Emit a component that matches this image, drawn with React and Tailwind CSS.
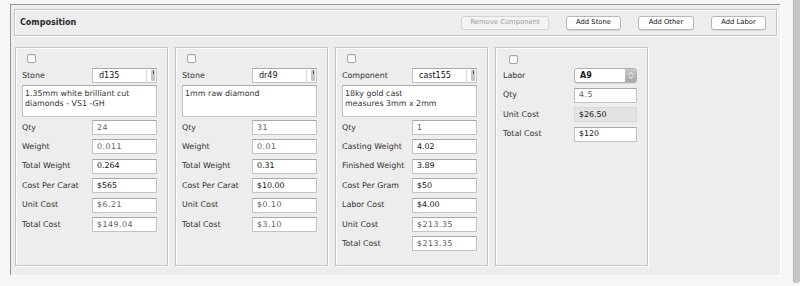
import React from "react";

const F = { fontFamily: '"DejaVu Sans", "Liberation Sans", sans-serif' };

const panels = [
  {
    kind: "Stone",
    code: "d135",
    desc: ["1.35mm white brilliant cut", "diamonds - VS1 -GH"],
    rows: [
      ["Qty", "24", 0],
      ["Weight", "0.011", 0],
      ["Total Weight", "0.264", 1],
      ["Cost Per Carat", "$565", 1],
      ["Unit Cost", "$6.21", 0],
      ["Total Cost", "$149.04", 0],
    ],
  },
  {
    kind: "Stone",
    code: "dr49",
    desc: ["1mm raw diamond"],
    rows: [
      ["Qty", "31", 0],
      ["Weight", "0.01", 0],
      ["Total Weight", "0.31", 1],
      ["Cost Per Carat", "$10.00", 1],
      ["Unit Cost", "$0.10", 0],
      ["Total Cost", "$3.10", 0],
    ],
  },
  {
    kind: "Component",
    code: "cast155",
    desc: ["18ky gold cast", "measures 3mm x 2mm"],
    rows: [
      ["Qty", "1", 0],
      ["Casting Weight", "4.02", 1],
      ["Finished Weight", "3.89", 1],
      ["Cost Per Gram", "$50", 1],
      ["Labor Cost", "$4.00", 1],
      ["Unit Cost", "$213.35", 0],
      ["Total Cost", "$213.35", 0],
    ],
  },
];

function Checkbox() {
  return (
    <div className="w-[9px] h-[9px] bg-white border border-[#a4a4a4] rounded-[2px] shadow-[inset_0_1px_0_#e8e8e8]" />
  );
}

function Field({ value, dark, disabled, w = "w-[65px]" }) {
  return (
    <div
      className={
        w +
        " h-[15px] flex items-center pl-[4px] border text-[7.9px] leading-none " +
        (disabled
          ? "bg-[#e3e3e3] border-[#d8d8d8] "
          : "bg-white border-[#c3c3c3] border-t-[#a8a8a8] ") +
        (dark ? "text-[#111]" : "text-[#5e5e5e] tracking-[0.5px]")
      }
    >
      {value}
    </div>
  );
}

function Label({ children }) {
  return <span className="text-[7.9px] text-[#333] leading-none">{children}</span>;
}

function Combo({ code }) {
  return (
    <div className="flex h-[15px] w-[65px]">
      <div className="flex-1 flex items-center pl-[6px] bg-white border border-[#c3c3c3] border-t-[#a8a8a8] border-r-0 text-[8px] text-[#111] leading-none">
        {code}
      </div>
      <div className="w-[11px] bg-white border border-[#c3c3c3] border-t-[#a8a8a8] border-l-[#dcdcdc] flex justify-end pr-[1px] pt-[1px]">
        <div className="w-[4px] h-[11px] rounded-[1px] bg-[#c4c4c4] flex justify-center pt-[1px]">
          <div className="w-[1px] h-[3px] bg-[#555]" />
        </div>
      </div>
    </div>
  );
}

const etched =
  "border border-[#c4c4c4] shadow-[inset_1px_1px_0_#ffffff,1px_1px_0_#ffffff]";

function ItemPanel({ p }) {
  return (
    <div className={"w-[153px] h-[219px] flex flex-col pt-[6px] pl-[6px] pr-[10px] " + etched}>
      <div className="pl-[5px]">
        <Checkbox />
      </div>
      <div className="flex items-center justify-between h-[15px] mt-[5px]">
        <Label>{p.kind}</Label>
        <Combo code={p.code} />
      </div>
      <div className="mt-[2px] h-[32px] w-[135px] bg-white border border-[#c3c3c3] border-t-[#a8a8a8] pl-[2px] pt-[3px] text-[7.9px] leading-[10px] text-[#333]">
        {p.desc.map((l) => (
          <div key={l}>{l}</div>
        ))}
      </div>
      <div className="flex flex-col gap-[4.4px] mt-[3px]">
        {p.rows.map(([l, v, d]) => (
          <div key={l} className="flex items-center justify-between h-[15px]">
            <Label>{l}</Label>
            <Field value={v} dark={d} />
          </div>
        ))}
      </div>
    </div>
  );
}

function LaborSelect() {
  return (
    <div className="w-[63px] h-[15px] flex rounded-[3px] border border-[#b0b0b0] bg-white overflow-hidden shadow-[0_1px_0_#d8d8d8]">
      <div className="flex-1 flex items-center pl-[5px] text-[8px] font-bold text-[#1a1a1a] leading-none">A9</div>
      <div className="w-[11px] bg-gradient-to-b from-[#c8c8c8] to-[#a6a6a6] flex items-center justify-center">
        <svg width="6" height="9" viewBox="0 0 6 9">
          <path d="M1 3.5 L3 1.5 L5 3.5" stroke="#fff" strokeWidth="1" fill="none" />
          <path d="M1 5.5 L3 7.5 L5 5.5" stroke="#fff" strokeWidth="1" fill="none" />
        </svg>
      </div>
    </div>
  );
}

function LaborPanel() {
  return (
    <div className={"w-[153px] h-[219px] flex flex-col pt-[7px] pl-[7px] pr-[10px] " + etched}>
      <div className="pl-[6px]">
        <Checkbox />
      </div>
      <div className="flex flex-col gap-[4.6px] mt-[4px]">
        <div className="flex items-center justify-between h-[15px]">
          <Label>Labor</Label>
          <LaborSelect />
        </div>
        {[
          ["Qty", "4.5", 0, 0],
          ["Unit Cost", "$26.50", 1, 1],
          ["Total Cost", "$120", 1, 0],
        ].map(([l, v, d, dis]) => (
          <div key={l} className="flex items-center justify-between h-[15px]">
            <Label>{l}</Label>
            <Field value={v} dark={d} disabled={dis} w="w-[63px]" />
          </div>
        ))}
      </div>
    </div>
  );
}

function Btn({ children, disabled, w }) {
  return (
    <div
      className={
        "h-[14px] flex items-center justify-center rounded-[3px] border text-[6.8px] leading-none " +
        (disabled
          ? "bg-[#f3f3f3] border-[#d4d4d4] text-[#9b9b9b]"
          : "bg-white border-[#b9b9b9] text-[#111] shadow-[0_1px_0_#d6d6d6]")
      }
      style={{ width: w }}
    >
      {children}
    </div>
  );
}

export default function App() {
  return (
    <div className="w-[800px] h-[286px] bg-[#f6f6f6] flex overflow-hidden" style={F}>
      <div className="pl-[10px] pt-[4px]">
        <div className="w-[770px] h-[271px] bg-[#ededed] border-t border-l border-[#969696] shadow-[1px_1px_0_#ffffff] pt-[4px] pl-[3px]">
          <div className={"w-[763px] h-[27px] flex items-center pl-[5px] pr-[10px] " + etched}>
            <span className="text-[8px] font-bold text-[#2a2a2a] leading-none">Composition</span>
            <div className="ml-auto flex items-center gap-[17px]">
              <Btn disabled w="88px">Remove Component</Btn>
              <Btn w="55px">Add Stone</Btn>
              <Btn w="56px">Add Other</Btn>
              <Btn w="55px">Add Labor</Btn>
            </div>
          </div>
          <div className="flex gap-[7px] mt-[11px] pl-[1px]">
            {panels.map((p) => (
              <ItemPanel key={p.code} p={p} />
            ))}
            <LaborPanel />
          </div>
        </div>
      </div>
      <div className="ml-auto w-[7px] h-[283px] bg-[#c6c6c6] border-l border-[#b4b4b4] rounded-b-[3px]" />
    </div>
  );
}
